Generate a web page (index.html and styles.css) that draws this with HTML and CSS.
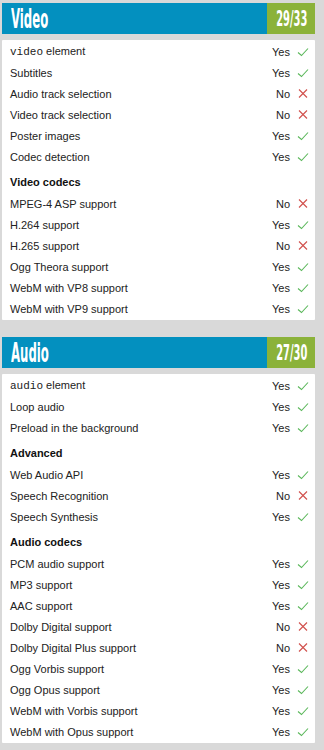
FILE: index.html
```html
<!DOCTYPE html>
<html>
<head>
<meta charset="utf-8">
<link rel="stylesheet" href="styles.css">
</head>
<body>
<svg width="0" height="0" class="defs">
  <defs>
    <symbol id="yes" viewBox="0 0 12 10"><path d="M1 5.5 L4.5 8.5 L11 1.5" fill="none" stroke="#5cb85c" stroke-width="1.1"/></symbol>
    <symbol id="no" viewBox="0 0 12 10"><path d="M2 0.5 L10 8.5 M10 0.5 L2 8.5" fill="none" stroke="#c9302c" stroke-width="1.1" opacity="0.85"/></symbol>
  </defs>
</svg>

<section class="block">
  <header class="head"><h2 class="title"><span>Video</span></h2><div class="score"><span>29/33</span></div></header>
  <div class="card">
    <div class="row"><span class="name"><code>video</code> element</span><span class="res">Yes</span><svg class="ic"><use href="#yes"/></svg></div>
    <div class="row"><span class="name">Subtitles</span><span class="res">Yes</span><svg class="ic"><use href="#yes"/></svg></div>
    <div class="row"><span class="name">Audio track selection</span><span class="res">No</span><svg class="ic"><use href="#no"/></svg></div>
    <div class="row"><span class="name">Video track selection</span><span class="res">No</span><svg class="ic"><use href="#no"/></svg></div>
    <div class="row"><span class="name">Poster images</span><span class="res">Yes</span><svg class="ic"><use href="#yes"/></svg></div>
    <div class="row"><span class="name">Codec detection</span><span class="res">Yes</span><svg class="ic"><use href="#yes"/></svg></div>
    <h3 class="sub">Video codecs</h3>
    <div class="row"><span class="name">MPEG-4 ASP support</span><span class="res">No</span><svg class="ic"><use href="#no"/></svg></div>
    <div class="row"><span class="name">H.264 support</span><span class="res">Yes</span><svg class="ic"><use href="#yes"/></svg></div>
    <div class="row"><span class="name">H.265 support</span><span class="res">No</span><svg class="ic"><use href="#no"/></svg></div>
    <div class="row"><span class="name">Ogg Theora support</span><span class="res">Yes</span><svg class="ic"><use href="#yes"/></svg></div>
    <div class="row"><span class="name">WebM with VP8 support</span><span class="res">Yes</span><svg class="ic"><use href="#yes"/></svg></div>
    <div class="row"><span class="name">WebM with VP9 support</span><span class="res">Yes</span><svg class="ic"><use href="#yes"/></svg></div>
  </div>
</section>

<section class="block">
  <header class="head"><h2 class="title"><span>Audio</span></h2><div class="score"><span>27/30</span></div></header>
  <div class="card">
    <div class="row"><span class="name"><code>audio</code> element</span><span class="res">Yes</span><svg class="ic"><use href="#yes"/></svg></div>
    <div class="row"><span class="name">Loop audio</span><span class="res">Yes</span><svg class="ic"><use href="#yes"/></svg></div>
    <div class="row"><span class="name">Preload in the background</span><span class="res">Yes</span><svg class="ic"><use href="#yes"/></svg></div>
    <h3 class="sub">Advanced</h3>
    <div class="row"><span class="name">Web Audio API</span><span class="res">Yes</span><svg class="ic"><use href="#yes"/></svg></div>
    <div class="row"><span class="name">Speech Recognition</span><span class="res">No</span><svg class="ic"><use href="#no"/></svg></div>
    <div class="row"><span class="name">Speech Synthesis</span><span class="res">Yes</span><svg class="ic"><use href="#yes"/></svg></div>
    <h3 class="sub">Audio codecs</h3>
    <div class="row"><span class="name">PCM audio support</span><span class="res">Yes</span><svg class="ic"><use href="#yes"/></svg></div>
    <div class="row"><span class="name">MP3 support</span><span class="res">Yes</span><svg class="ic"><use href="#yes"/></svg></div>
    <div class="row"><span class="name">AAC support</span><span class="res">Yes</span><svg class="ic"><use href="#yes"/></svg></div>
    <div class="row"><span class="name">Dolby Digital support</span><span class="res">No</span><svg class="ic"><use href="#no"/></svg></div>
    <div class="row"><span class="name">Dolby Digital Plus support</span><span class="res">No</span><svg class="ic"><use href="#no"/></svg></div>
    <div class="row"><span class="name">Ogg Vorbis support</span><span class="res">Yes</span><svg class="ic"><use href="#yes"/></svg></div>
    <div class="row"><span class="name">Ogg Opus support</span><span class="res">Yes</span><svg class="ic"><use href="#yes"/></svg></div>
    <div class="row"><span class="name">WebM with Vorbis support</span><span class="res">Yes</span><svg class="ic"><use href="#yes"/></svg></div>
    <div class="row"><span class="name">WebM with Opus support</span><span class="res">Yes</span><svg class="ic"><use href="#yes"/></svg></div>
  </div>
</section>
</body>
</html>
```

FILE: styles.css
```css
html, body { margin: 0; padding: 0; }
body {
  background: #d9d9d9;
  padding: 3px 9px 0 2px;
  font-family: "Liberation Sans", Arial, sans-serif;
  color: #222;
  overflow: hidden;
}
.defs { position: absolute; width: 0; height: 0; }
.block { margin-bottom: 17px; }
.head {
  display: flex;
  height: 31px;
  background: #0390bf;
  color: #fff;
  margin-bottom: 6px;
}
.title {
  flex: 1;
  margin: 0;
  padding-left: 9px;
  display: flex;
  align-items: center;
  font-family: "DejaVu Sans Condensed", sans-serif;
  font-weight: bold;
  font-size: 26px;
  line-height: 1;
}
.title span {
  display: inline-block;
  transform: scaleX(0.5);
  transform-origin: left center;
  margin-top: 1px;
}
.score {
  width: 48px;
  background: #8bb23a;
  display: flex;
  align-items: center;
  justify-content: flex-end;
  padding-right: 8px;
  box-sizing: border-box;
  font-family: "DejaVu Sans Condensed", sans-serif;
  font-weight: bold;
  font-size: 22px;
  line-height: 1;
  white-space: nowrap;
}
.score span {
  display: inline-block;
  transform: scaleX(0.5);
  transform-origin: right center;
  margin-top: 1px;
}
.card {
  background: #fff;
  padding: 1px 0 1px;
  border-radius: 1px;
}
.row {
  display: flex;
  align-items: center;
  height: 21px;
  padding: 0 6px 0 8px;
  font-size: 11px;
}
.name { flex: 1; }
.name code {
  font-family: "Liberation Mono", "DejaVu Sans Mono", monospace;
  font-size: 11px;
}
.res { text-align: right; }
.ic {
  width: 12px;
  height: 10px;
  margin-left: 7px;
}
.sub {
  margin: 0;
  height: 26px;
  box-sizing: border-box;
  padding: 9px 8px 0;
  font-size: 11px;
  font-weight: bold;
  color: #111;
}
```
